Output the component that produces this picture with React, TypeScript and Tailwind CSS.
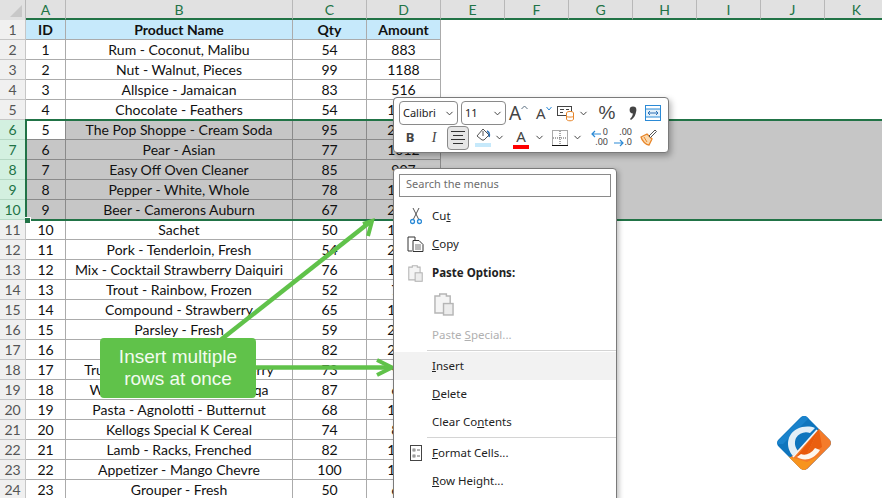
import React from 'react';
import { ChevronDown } from 'lucide-react';

const COLUMNS: [string, string][] = [
  ['A', 'w-[40px]'],
  ['B', 'w-[227px]'],
  ['C', 'w-[74px]'],
  ['D', 'w-[74px]'],
  ['E', 'w-[64px]'],
  ['F', 'w-[64px]'],
  ['G', 'w-[64px]'],
  ['H', 'w-[64px]'],
  ['I', 'w-[64px]'],
  ['J', 'w-[64px]'],
  ['K', 'w-[64px]'],
];

const ROWS: [string, string, string, string][] = [
  ['ID', 'Product Name', 'Qty', 'Amount'],
  ['1', 'Rum - Coconut, Malibu', '54', '883'],
  ['2', 'Nut - Walnut, Pieces', '99', '1188'],
  ['3', 'Allspice - Jamaican', '83', '516'],
  ['4', 'Chocolate - Feathers', '54', '1460'],
  ['5', 'The Pop Shoppe - Cream Soda', '95', '2375'],
  ['6', 'Pear - Asian', '77', '1012'],
  ['7', 'Easy Off Oven Cleaner', '85', '907'],
  ['8', 'Pepper - White, Whole', '78', '1326'],
  ['9', 'Beer - Camerons Auburn', '67', '2010'],
  ['10', 'Sachet', '50', '1250'],
  ['11', 'Pork - Tenderloin, Fresh', '54', '2106'],
  ['12', 'Mix - Cocktail Strawberry Daiquiri', '76', '1596'],
  ['13', 'Trout - Rainbow, Frozen', '52', '780'],
  ['14', 'Compound - Strawberry', '65', '1105'],
  ['15', 'Parsley - Fresh', '59', '2183'],
  ['16', '', '82', '2460'],
  ['17', 'Truffle Cups - White Cranberry', '73', '949'],
  ['18', 'Wine - Magnotta, Merlot Vqa', '87', '696'],
  ['19', 'Pasta - Agnolotti - Butternut', '68', '1088'],
  ['20', 'Kellogs Special K Cereal', '74', '888'],
  ['21', 'Lamb - Racks, Frenched', '82', '1230'],
  ['22', 'Appetizer - Mango Chevre', '100', '1500'],
  ['23', 'Grouper - Fresh', '50', '650'],
];

const CELL_WIDTHS = ['w-[40px]', 'w-[227px]', 'w-[74px]', 'w-[74px]'];

function SheetRow({ index, cells }: { index: number; cells: string[] }) {
  const selected = index >= 5 && index <= 9;
  const header = index === 0;
  return (
    <div className={`flex h-[20px] ${selected ? 'bg-[#c6c6c6]' : 'bg-white'}`}>
      <div
        className={`w-[26px] shrink-0 flex items-center justify-center border-r border-b text-[14px] ${
          selected ? 'bg-[#d3f0e0] text-[#217346] border-[#b5d8c4]' : 'bg-[#f0f0f0] text-[#555555] border-[#c6c6c6]'
        }`}
      >
        {index + 1}
      </div>
      {cells.map((c, i) => (
        <div
          key={i}
          className={`${CELL_WIDTHS[i]} shrink-0 flex items-center justify-center whitespace-nowrap overflow-hidden border-r border-b text-[14px] text-[#111111] ${
            selected ? 'border-[#8a8a8a]' : 'border-[#ababab]'
          } ${header ? 'bg-[#c6e9fb] font-bold' : ''} ${selected && i === 0 && index === 5 ? 'bg-white' : ''}`}
        >
          {c}
        </div>
      ))}
    </div>
  );
}

function Chev() {
  return <ChevronDown size={11} strokeWidth={2} className="text-[#333333] shrink-0" />;
}

function FontSelect({ label, width }: { label: string; width: string }) {
  return (
    <div className={`${width} h-[24px] flex items-center justify-between pl-[3px] pr-[2px] border border-[#8a8a8a] rounded-[4px] text-[11px] text-[#222222]`}>
      <span>{label}</span>
      <Chev />
    </div>
  );
}

function MiniToolbar() {
  return (
    <div className="absolute left-[393px] top-[97px] w-[276px] h-[56px] bg-white border border-[#7a7a7a] rounded-[4px] shadow-[2px_3px_6px_rgba(0,0,0,0.3)] pl-[5px] pt-[3px] font-['Noto_Sans',sans-serif]">
      <div className="flex items-center h-[24px]">
        <FontSelect label="Calibri" width="w-[59px]" />
        <div className="ml-[3px]">
          <FontSelect label="11" width="w-[45px]" />
        </div>
        {/* grow / shrink font */}
        <div className="w-[20px] ml-[3px] flex items-start text-[19px] leading-[24px] text-[#444444]">
          A
          <svg width="7" height="5" viewBox="0 0 7 5" className="mt-[4px] shrink-0">
            <path d="M0.500 4L3.500 1l3 3" fill="none" stroke="#5a6f80" />
          </svg>
        </div>
        <div className="w-[16px] ml-[7px] flex items-start text-[15px] leading-[24px] text-[#444444]">
          A
          <svg width="6" height="5" viewBox="0 0 6 5" className="mt-[5px] shrink-0">
            <path d="M0.500 1L3 4l2.500-3" fill="none" stroke="#2b8ad6" />
          </svg>
        </div>
        <svg width="20" height="18" viewBox="0 0 20 18" className="ml-[5px] shrink-0">
          <rect x="0.500" y="2.500" width="14" height="9" fill="#fff" stroke="#444" />
          <path d="M3 5.500h4M3 8.500h3M9 5.500h3" stroke="#444" />
          <ellipse cx="13" cy="9" rx="3.500" ry="1.600" fill="#fff" stroke="#e8862a" />
          <path d="M9.500 9v6c0 1 1.500 1.800 3.500 1.800s3.500-.8 3.500-1.800V9" fill="#fff" stroke="#e8862a" />
          <path d="M9.500 12.300c0 1 7 1 7 0" fill="none" stroke="#e8862a" />
        </svg>
        <span className="ml-[1px]"><Chev /></span>
        <span className="ml-[8px] w-[20px] text-center text-[19px] leading-[24px] text-[#444444] font-['Liberation_Sans',sans-serif]">%</span>
        <svg width="8" height="16" viewBox="0 0 8 16" className="ml-[12px] shrink-0">
          <circle cx="4" cy="5" r="3.400" fill="#444" />
          <path d="M7 6c0 4-2 7-5 9l-1-1c2-2 3-4 3-7z" fill="#444" />
        </svg>
        <svg width="16" height="16" viewBox="0 0 16 16" className="ml-[8px] shrink-0">
          <rect x="0.500" y="0.500" width="15" height="15" fill="#fff" stroke="#2b8ad6" />
          <rect x="1" y="4" width="14" height="8" fill="#e3f1fb" />
          <path d="M0.500 4h15M0.500 12h15" stroke="#2b8ad6" />
          <path d="M3 8h10M5 6L3 8l2 2M11 6l2 2-2 2" fill="none" stroke="#2b6fb5" />
        </svg>
      </div>
      <div className="flex items-center h-[25px]">
        <span className="w-[22px] text-center text-[13px] font-bold text-[#444444]">B</span>
        <span className="w-[26px] text-center text-[14px] italic text-[#444444] font-['Liberation_Serif',serif]">I</span>
        <div className="w-[22px] h-[24px] flex flex-col items-center justify-center gap-[3px] bg-[#e6e6e6] border border-[#8a8a8a] rounded-[4px]">
          <div className="w-[14px] h-[1px] bg-[#333333]" />
          <div className="w-[10px] h-[1px] bg-[#333333]" />
          <div className="w-[14px] h-[1px] bg-[#333333]" />
          <div className="w-[10px] h-[1px] bg-[#333333]" />
        </div>
        <svg width="16" height="19" viewBox="0 0 16 19" className="ml-[6px] shrink-0">
          <path d="M8 1l6 6-5 5H7L2 8z" fill="#fff" stroke="#555" />
          <path d="M8 3v5" stroke="#555" />
          <path d="M12 3c2 1 3 3 2 6" fill="none" stroke="#2b6fb5" strokeWidth="1.500" />
          <rect x="0" y="15" width="16" height="4" fill="#c6e9fb" />
        </svg>
        <span className="ml-[3px]"><Chev /></span>
        <div className="ml-[8px] w-[16px] h-[22px] flex flex-col items-center">
          <span className="text-[15px] leading-[18px] text-[#444444]">A</span>
          <div className="w-[16px] h-[4px] bg-[#ff0000]" />
        </div>
        <span className="ml-[5px]"><Chev /></span>
        <svg width="16" height="16" viewBox="0 0 16 16" className="ml-[7px] shrink-0">
          <rect x="0.500" y="0.500" width="15" height="15" fill="none" stroke="#555" strokeDasharray="1 1" />
          <path d="M8 1v14M1 8h14" stroke="#555" strokeDasharray="1 1" />
          <path d="M0 15.500h16" stroke="#111" />
        </svg>
        <span className="ml-[4px]"><Chev /></span>
        <div className="ml-[8px] w-[17px] shrink-0 relative h-[18px]">
          <svg width="17" height="18" viewBox="0 0 17 18">
            <path d="M10 5H1M4 2L1 5l3 3" fill="none" stroke="#2b8ad6" strokeWidth="1.200" />
          </svg>
          <span className="absolute right-0 top-[-2px] text-[9px] leading-[10px] text-[#444444]">0</span>
          <span className="absolute right-0 top-[8px] text-[9px] leading-[10px] text-[#444444]">.00</span>
        </div>
        <div className="ml-[6px] w-[18px] shrink-0 relative h-[18px]">
          <svg width="18" height="18" viewBox="0 0 18 18">
            <path d="M0 14h9M6 11l3 3-3 3" fill="none" stroke="#2b8ad6" strokeWidth="1.200" />
          </svg>
          <span className="absolute right-0 top-[-2px] text-[9px] leading-[10px] text-[#444444]">.00</span>
          <span className="absolute right-0 top-[8px] text-[9px] leading-[10px] text-[#444444]">.0</span>
        </div>
        <svg width="17" height="17" viewBox="0 0 17 17" className="ml-[8px] shrink-0">
          <path d="M1 8l6-3 5 5-3 6c-3 0-7-4-8-8z" fill="#fbd9ae" stroke="#e8862a" strokeWidth="1.300" />
          <path d="M9 7l6-6 1.500 1.500-6 6z" fill="#fff" stroke="#555" />
          <path d="M4 8l3 5" stroke="#e8862a" />
        </svg>
      </div>
    </div>
  );
}

function MenuItem({ children, icon, active, muted, bold }: { children: React.ReactNode; icon?: React.ReactNode; active?: boolean; muted?: boolean; bold?: boolean }) {
  return (
    <div className={`flex items-center h-[28px] ${active ? 'bg-[#f2f2f2]' : ''}`}>
      <div className="w-[33px] ml-[5px] flex items-center justify-center shrink-0">{icon}</div>
      <span className={`whitespace-nowrap ${muted ? 'text-[#b0b0b0]' : 'text-[#222222]'} ${bold ? 'font-bold' : ''}`}>{children}</span>
    </div>
  );
}

function Separator() {
  return <div className="ml-[33px] h-[1px] bg-[#d4d4d4]" />;
}

function ClipboardIcon({ big }: { big?: boolean }) {
  return (
    <svg width={big ? 20 : 15} height={big ? 23 : 17} viewBox="0 0 21 24">
      <path d="M1 3h5V1h7v2h4v18H1z" fill="#f4f4f4" stroke="#b5b5b5" strokeWidth="1.500" />
      <rect x="10" y="11" width="10" height="12" fill="#ececec" stroke="#b5b5b5" strokeWidth="1.500" />
    </svg>
  );
}

function ContextMenu() {
  return (
    <div className="absolute left-[393px] top-[168px] w-[224px] h-[340px] bg-white border border-[#7a7a7a] rounded-[4px] shadow-[2px_2px_5px_rgba(0,0,0,0.25)] text-[11.5px] font-['Noto_Sans',sans-serif]">
      <div className="mx-[5px] mt-[5px] h-[23px] border border-[#8a8a8a] flex items-center px-[6px] pb-[2px] text-[11px] text-[#6e6e6e]">
        Search the menus
      </div>
      <div className="mt-[5px]">
        <MenuItem
          icon={
            <svg width="12" height="17" viewBox="0 0 12 17">
              <path d="M3 0l5.500 11M9 0L3.500 11" fill="none" stroke="#555" />
              <circle cx="2.500" cy="13.500" r="2" fill="none" stroke="#2b8ad6" strokeWidth="1.300" />
              <circle cx="9.500" cy="13.500" r="2" fill="none" stroke="#2b8ad6" strokeWidth="1.300" />
            </svg>
          }
        >
          Cu<u>t</u>
        </MenuItem>
        <MenuItem
          icon={
            <svg width="17" height="16" viewBox="0 0 17 16">
              <path d="M5 15H1V1h7v3" fill="none" stroke="#333" />
              <path d="M6 4.500h6l4 4v7H6z" fill="#fff" stroke="#333" />
              <path d="M8 9h6M8 11h6M8 13h6" stroke="#777" />
            </svg>
          }
        >
          <u>C</u>opy
        </MenuItem>
        <div className="h-[1px]" />
        <MenuItem bold icon={<ClipboardIcon />}>Paste Options:</MenuItem>
        <div className="h-[34px] pl-[40px] flex items-center">
          <ClipboardIcon big />
        </div>
        <MenuItem muted>
          Paste <u>S</u>pecial...
        </MenuItem>
        <div className="h-[1px]" />
        <Separator />
        <div className="h-[1px]" />
        <MenuItem active>
          <u>I</u>nsert
        </MenuItem>
        <MenuItem>
          <u>D</u>elete
        </MenuItem>
        <MenuItem>
          Clear Co<u>n</u>tents
        </MenuItem>
        <div className="h-[1px]" />
        <Separator />
        <div className="h-[1px]" />
        <MenuItem
          icon={
            <svg width="12" height="16" viewBox="0 0 12 16">
              <rect x="0.500" y="0.500" width="11" height="15" fill="#fff" stroke="#444" />
              <rect x="3" y="4" width="2" height="2" fill="#fff" stroke="#666" strokeWidth="0.800" />
              <rect x="3" y="10" width="2" height="2" fill="#fff" stroke="#666" strokeWidth="0.800" />
              <path d="M7 5h3M7 11h3" stroke="#666" />
            </svg>
          }
        >
          <u>F</u>ormat Cells...
        </MenuItem>
        <MenuItem>
          <u>R</u>ow Height...
        </MenuItem>
      </div>
    </div>
  );
}

function Logo() {
  return (
    <svg width="58" height="58" viewBox="0 0 58 58" className="absolute left-[775px] top-[414px]">
      <defs>
        <clipPath id="diamond">
          <rect x="8.500" y="8.500" width="41" height="41" rx="5" transform="rotate(45 29 29)" />
        </clipPath>
      </defs>
      <g clipPath="url(#diamond)">
        <rect width="58" height="58" fill="#0f75bd" />
        <path d="M0 30L30 0h8L8 30z" fill="#1a83cc" />
        <path d="M58 1v57H1z" fill="#f47b2a" />
        <path d="M44 15L30 44l-8-2z" fill="#e8590c" />
        <path d="M44 15l3 18-17 11z" fill="#ea5f10" />
        <path d="M12 42l16 16 16-16-12 6z" fill="#f7941e" />
      </g>
      <path d="M18 42C10 33 12 20 22 15C28 12 35 12 40 14L35 19C30 17 24 19 21 24C19 29 20 33 23 37z" fill="#e3eff7" />
      <path d="M18 43L42 16" stroke="#f4f8fb" strokeWidth="1.600" />
      <path d="M22 43C28 47 38 47 45 36L40 34C36 40 30 42 26 40z" fill="#fdf6ef" />
    </svg>
  );
}

export default function App() {
  return (
    <div className="relative w-[882px] h-[498px] overflow-hidden bg-white font-['Lato',sans-serif]">
      {/* Column headers */}
      <div className="flex h-[20px] bg-[#e1e1e1]">
        <div className="relative w-[26px] shrink-0 border-r border-r-[#b8b8b8]">
          <div className="absolute right-[3px] bottom-[3px] w-0 h-0 border-l-[12px] border-l-transparent border-b-[12px] border-b-[#c8c8c8]" />
        </div>
        {COLUMNS.map(([name, w]) => (
          <div
            key={name}
            className={`${w} shrink-0 flex items-center justify-center border-r border-r-[#b8b8b8] border-b-2 border-b-[#217346] text-[14px] text-[#217346]`}
          >
            {name}
          </div>
        ))}
      </div>

      {/* Sheet rows */}
      {ROWS.map((r, i) => (
        <SheetRow key={i} index={i} cells={r} />
      ))}

      {/* Selection outline */}
      <div className="absolute left-[25px] top-[119px] right-[-4px] h-[102px] border-2 border-[#217346] pointer-events-none" />
      <div className="absolute left-[25px] top-[217px] w-[6px] h-[6px] bg-[#217346] border-t border-r border-white" />

      {/* Arrows */}
      <svg width="882" height="498" viewBox="0 0 882 498" className="absolute left-0 top-0 pointer-events-none">
        <path d="M218 342L370 222" stroke="#60c24a" strokeWidth="4.500" fill="none" />
        <path d="M363 224l9-3-4 15" stroke="#60c24a" strokeWidth="4" fill="none" />
        <path d="M250 367.500H390" stroke="#60c24a" strokeWidth="4.500" fill="none" />
        <path d="M377 360l15 7.500-15 7.500" stroke="#60c24a" strokeWidth="4" fill="none" />
      </svg>

      <MiniToolbar />
      <ContextMenu />

      {/* Callout */}
      <div className="absolute left-[100px] top-[338px] w-[156px] h-[60px] bg-[#60c24a] rounded-[4px] flex items-center justify-center text-center text-[19px] leading-[22px] text-[#f2fbef] font-['Liberation_Sans',sans-serif]">
        Insert multiple
        <br />
        rows at once
      </div>

      <Logo />
    </div>
  );
}
